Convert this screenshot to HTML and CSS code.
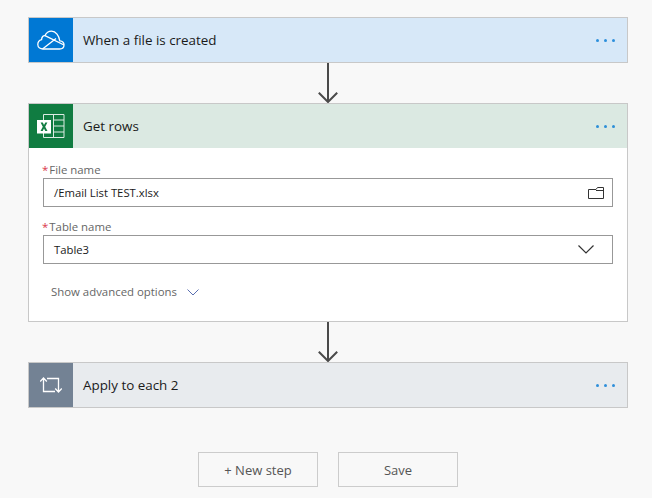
FILE: index.html
```html
<!DOCTYPE html>
<html lang="en">
<head>
  <meta charset="UTF-8" />
  <meta name="viewport" content="width=device-width, initial-scale=1.0" />
  <title>Flow editor</title>
  <link rel="stylesheet" href="styles.css">
</head>
<body>
  <div class="flow">
    <div class="card">
      <div class="card-header trigger">
        <div class="card-icon icon-onedrive">
          <svg width="28" height="20" viewBox="0 0 28 20" fill="none" stroke="#fff" stroke-width="1.3">
            <path d="M6 19H22.5C25.2 19 27 17.2 27 15C27 12.8 25.4 11 22.8 10.8C22 6 19 1.2 14.5 1.2C11.5 1.2 9.2 3 8 5.6C6.4 5.2 4.6 7 4.6 9.6C2.2 10.2 .8 12.2 .8 14.6C.8 17.2 3.2 19 6 19Z"/>
            <path d="M5.5 19L19 8.5M8 5.6L27 15"/>
          </svg>
        </div>
        <div class="card-title">When a file is created</div>
        <div class="card-menu"><span></span><span></span><span></span></div>
      </div>
    </div>

    <div class="connector">
      <svg width="22" height="40" viewBox="0 0 22 40" fill="none" stroke="#4a4a4a" stroke-width="2">
        <path d="M11 0V39M1.8 29.8L11 39L20.2 29.8"/>
      </svg>
    </div>

    <div class="card">
      <div class="card-header action">
        <div class="card-icon icon-excel">
          <svg width="28" height="24" viewBox="0 0 28 24">
            <path d="M6.5 .5H27V23.5H6.5ZM16.5 .5V23.5M16.5 6H27M16.5 12H27M16.5 18H27" fill="none" stroke="#dcebe3"/>
            <rect x="0" y="6" width="14" height="13.5" fill="#fff"/>
            <path d="M3.6 8.5H5.8L7 11L8.3 8.5H10.4L8.2 12.7L10.5 17H8.3L7 14.4L5.7 17H3.5L5.8 12.7Z" fill="#107c41"/>
          </svg>
        </div>
        <div class="card-title">Get rows</div>
        <div class="card-menu"><span></span><span></span><span></span></div>
      </div>
      <div class="card-body">
        <label class="field-label"><i>*</i>File name</label>
        <div class="field">
          <span>/Email List TEST.xlsx</span>
          <svg width="16" height="12" viewBox="0 0 16 12" fill="none" stroke="#333">
            <path d="M.5 2.5H8L9.5 .5H15.5V11.5H.5ZM8 3.5H15.5"/>
          </svg>
        </div>
        <label class="field-label"><i>*</i>Table name</label>
        <div class="field">
          <span>Table3</span>
          <svg class="chevron" width="16" height="9" viewBox="0 0 16 9" fill="none" stroke="#333" stroke-width="1.2">
            <path d="M.5 .5L8 8L15.5 .5"/>
          </svg>
        </div>
        <div class="advanced">
          <span>Show advanced options</span>
          <svg width="12" height="7" viewBox="0 0 12 7" fill="none" stroke="#5a6fb0">
            <path d="M.5 .5L6 6L11.5 .5"/>
          </svg>
        </div>
      </div>
    </div>

    <div class="connector">
      <svg width="22" height="40" viewBox="0 0 22 40" fill="none" stroke="#4a4a4a" stroke-width="2">
        <path d="M11 0V39M1.8 29.8L11 39L20.2 29.8"/>
      </svg>
    </div>

    <div class="card">
      <div class="card-header loop">
        <div class="card-icon icon-loop">
          <svg width="22" height="16" viewBox="0 0 22 16" fill="none" stroke="#fff" stroke-width="1.3">
            <path d="M3.5 1V14.5H15M7 1.5H18.5V15M.2 4.5L3.5 1L6.8 4.5M15.2 11.5L18.5 15L21.8 11.5"/>
          </svg>
        </div>
        <div class="card-title">Apply to each 2</div>
        <div class="card-menu"><span></span><span></span><span></span></div>
      </div>
    </div>

    <div class="actions">
      <button>+ New step</button>
      <button>Save</button>
    </div>
  </div>
</body>
</html>
```

FILE: styles.css
```css
body {
  margin: 0;
  font-family: "Open Sans", "Noto Sans", sans-serif;
  background-color: #f8f8f8;
  color: #1a1a1a;
  height: 498px;
  overflow: hidden;
}
.flow {
  width: 600px;
  margin-left: 28px;
  padding-top: 17px;
}
.card {
  border: 1px solid #c8c8c8;
  background-color: #ffffff;
}
.card-header {
  display: flex;
  align-items: center;
  height: 44px;
}
.trigger {
  background-color: #d7e8f8;
}
.action {
  background-color: #dbe9e2;
}
.loop {
  background-color: #e8ebee;
}
.card-icon {
  width: 44px;
  height: 44px;
  display: flex;
  align-items: center;
  justify-content: center;
}
.icon-onedrive {
  background-color: #0078d4;
}
.icon-excel {
  background-color: #107c41;
}
.icon-loop {
  background-color: #738294;
}
.card-title {
  flex: 1;
  margin-left: 10px;
  font-size: 13.4px;
}
.card-menu {
  display: flex;
  gap: 5px;
  margin-right: 12px;
}
.card-menu span {
  width: 3px;
  height: 3px;
  border-radius: 50%;
  background-color: #0078d4;
  opacity: 0.8;
}
.connector {
  height: 40px;
  display: flex;
  justify-content: center;
}
.card-body {
  padding: 15px 14px 21px;
}
.field-label {
  display: block;
  height: 15px;
  font-size: 11.4px;
  line-height: 13px;
  color: #666666;
}
.field-label i {
  font-style: normal;
  color: #d9364a;
  margin: 0 1px 0 -1px;
}
.field {
  display: flex;
  align-items: center;
  justify-content: space-between;
  box-sizing: border-box;
  height: 29px;
  margin-bottom: 13px;
  padding: 0 8px 0 10px;
  border: 1px solid #989898;
  font-size: 11.3px;
}
.chevron {
  margin-right: 10px;
}
.advanced {
  display: flex;
  align-items: center;
  gap: 10px;
  margin: 20px 0 0 8px;
  font-size: 11.4px;
  line-height: 16px;
  color: #666666;
}
.actions {
  display: flex;
  justify-content: center;
  gap: 20px;
  margin-top: 44px;
}
.actions button {
  width: 120px;
  height: 35px;
  background-color: #f8f8f8;
  border: 1px solid #cccccc;
  font-family: inherit;
  font-size: 13px;
  color: #555555;
}
```
